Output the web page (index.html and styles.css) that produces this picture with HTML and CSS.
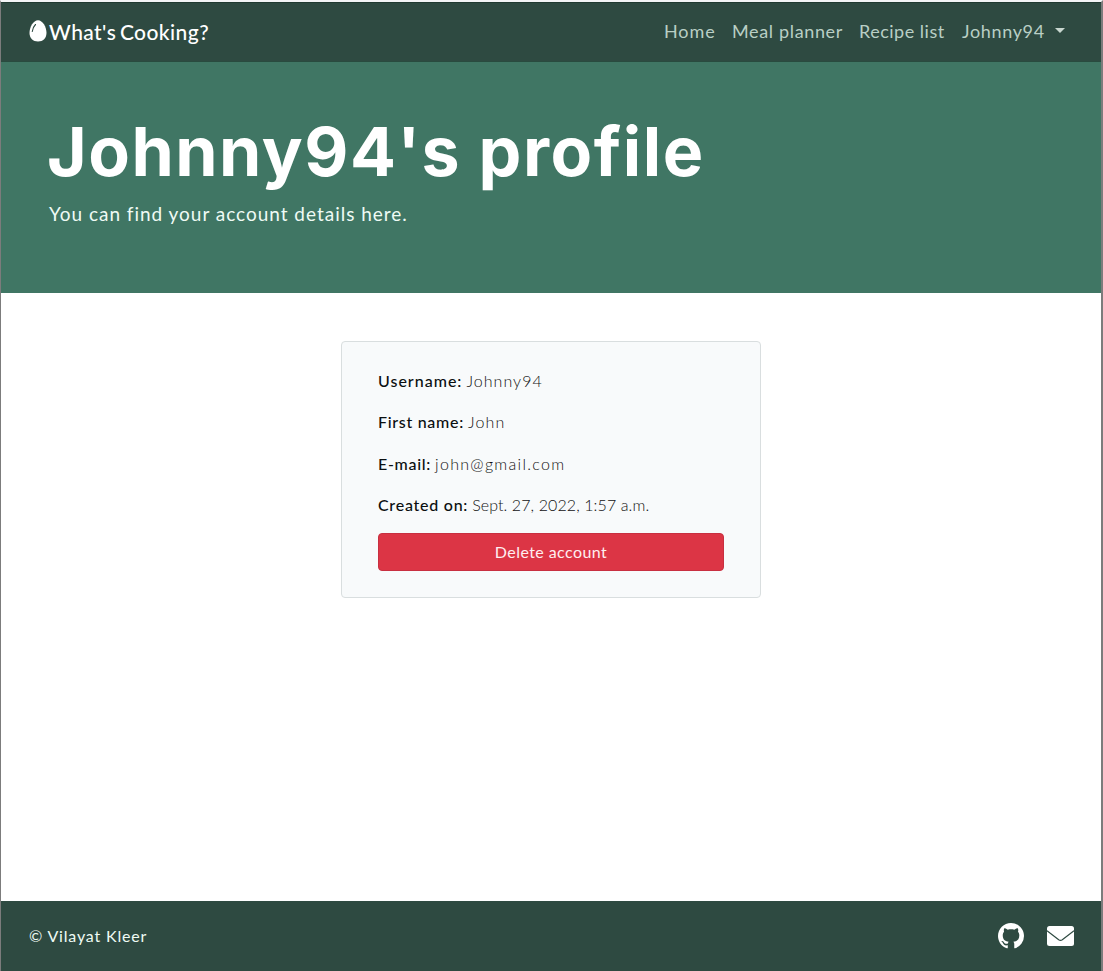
FILE: index.html
```html
<!DOCTYPE html>
<html lang="en">
<head>
<meta charset="utf-8">
<title>What's Cooking?</title>
<link rel="stylesheet" href="styles.css">
</head>
<body>
<div class="page">
  <header class="navbar">
    <a class="brand">
      <svg class="egg" viewBox="0 0 18 22"><path fill="#fff" d="M9 .3C4.400.3.5 7 .5 13c0 5 3.500 8.500 8.500 8.500s8.500-3.500 8.500-8.500C17.500 7 13.600.3 9 .3z"/><path d="M3.300 11.500C3.600 8.700 4.700 6.300 6.500 4.500" fill="none" stroke="#2e4a41" stroke-width="1.100" stroke-linecap="round"/></svg>
      <span class="brand-name">What's Cooking?</span>
    </a>
    <nav class="links">
      <a class="link home">Home</a>
      <a class="link planner">Meal planner</a>
      <a class="link recipes">Recipe list</a>
      <a class="link user">Johnny94</a>
      <span class="caret"></span>
    </nav>
  </header>
  <section class="hero">
    <h1 class="title">Johnny94's profile</h1>
    <p class="lead">You can find your account details here.</p>
  </section>
  <main class="content">
    <div class="card">
      <p class="row"><b class="k1">Username:</b><span class="v1">Johnny94</span></p>
      <p class="row"><b class="k2">First name:</b><span class="v2">John</span></p>
      <p class="row"><b class="k3">E-mail:</b><span class="v3">john@gmail.com</span></p>
      <p class="row"><b class="k4">Created on:</b><span class="v4">Sept. 27, 2022, 1:57 a.m.</span></p>
      <button class="delete"><span>Delete account</span></button>
    </div>
  </main>
  <footer class="footer">
    <span class="copy">© Vilayat Kleer</span>
    <div class="social">
      <svg class="github" viewBox="0 0 16 16"><path fill="#fff" d="M8 0C3.580 0 0 3.580 0 8c0 3.540 2.290 6.530 5.470 7.590.4.070.55-.17.55-.38 0-.19-.01-.82-.01-1.490-2.010.37-2.530-.49-2.690-.94-.09-.23-.48-.94-.82-1.130-.28-.15-.68-.52-.01-.53.63-.01 1.080.58 1.230.82.72 1.210 1.870.87 2.330.66.07-.52.28-.87.51-1.070-1.780-.2-3.640-.89-3.640-3.950 0-.87.31-1.590.82-2.150-.08-.2-.36-1.020.08-2.120 0 0 .67-.21 2.200.82.64-.18 1.320-.27 2-.27s1.360.09 2 .27c1.530-1.040 2.200-.82 2.200-.82.44 1.100.16 1.920.08 2.120.51.56.82 1.270.82 2.150 0 3.070-1.870 3.750-3.650 3.950.29.25.54.73.54 1.480 0 1.070-.01 1.930-.01 2.200 0 .21.15.46.55.38A8.010 8.010 0 0 0 16 8c0-4.420-3.580-8-8-8z"/></svg>
      <svg class="mail" viewBox="0 0 27 20"><rect width="27" height="20" rx="2.500" fill="#fff"/><path d="M0 4.800L11.700 13.700Q13.500 15 15.300 13.700L27 4.800" fill="none" stroke="#2e4a41" stroke-width="1.200"/></svg>
    </div>
  </footer>
</div>
</body>
</html>
```
FILE: styles.css
```css
* { box-sizing: border-box; }
body { margin: 0; background: #fff; font-family: Lato, "Open Sans", sans-serif; }
.page { height: 971px; display: flex; flex-direction: column; border-top: 2px solid #f3f5f6; border-left: 1px solid #7c7c7c; border-right: 2px solid #7c7c7c; overflow: hidden; }
.navbar { height: 60px; flex: none; display: flex; justify-content: space-between; align-items: center; padding: 0 36px 0 28px; background: #2e4a41; border-top: 1px solid #203a31; border-bottom: 1px solid #294b3f; }
.brand { display: flex; align-items: center; gap: 2px; color: #fff; }
.egg { width: 18px; height: 22px; margin-top: -2px; }
.brand-name { font-size: 21px; line-height: 30px; font-weight: 500; white-space: nowrap; letter-spacing: .42px; word-spacing: -2px; }
.links { display: flex; align-items: center; color: #b9cfc5; font-size: 18px; line-height: 28px; white-space: nowrap; margin-top: -2px; }
.home { width: 68px; letter-spacing: .9px; margin-left: -1px; }
.planner { width: 127px; letter-spacing: .65px; }
.recipes { width: 103px; letter-spacing: .5px; }
.user { width: 93px; letter-spacing: .65px; }
.caret { border: 5.500px solid transparent; border-top-color: #c9d7d0; border-bottom: 0; margin-top: -1px; }
.hero { height: 231px; flex: none; background: #407664; color: #fff; padding: 47px 48px; }
.title { margin: 0 0 0 -2px; font: 700 68px/84px Inter, sans-serif; letter-spacing: 1.500px; white-space: nowrap; }
.lead { margin: 6px 0 0; font-size: 19px; line-height: 30px; letter-spacing: .98px; color: #effbf5; white-space: nowrap; }
.content { flex: 1; display: flex; justify-content: center; align-items: flex-start; padding-top: 48px; }
.card { width: 420px; height: 257px; background: #f8fafb; border: 1px solid #d9dedf; border-radius: 4px; padding: 27px 36px 0; }
.row { margin: 0 0 17.300px; font-size: 16px; line-height: 24px; display: flex; gap: 4px; color: #111; white-space: nowrap; font-weight: 300; }
.row b { font-weight: 500; color: #0b0f10; }
.k1 { letter-spacing: 1px; }
.k2 { letter-spacing: .7px; }
.k3 { letter-spacing: .7px; }
.k4 { letter-spacing: .75px; }
.v1 { letter-spacing: 1.050px; }
.v2 { letter-spacing: 1.200px; }
.v3 { letter-spacing: 1.300px; }
.v4 { letter-spacing: .1px; }
.delete { display: block; width: 346px; height: 38px; margin-top: -1px; padding: 0; border: 1px solid #c82f40; border-radius: 4px; background: #dc3545; color: #ffeef0; font: 16px/24px Lato, sans-serif; letter-spacing: .42px; }
.footer { height: 70px; flex: none; display: flex; align-items: center; justify-content: space-between; padding: 0 27px 0 28px; background: #2e4a41; color: #eefbf4; font-size: 16px; }
.copy { letter-spacing: .82px; margin-top: -2px; }
.social { display: flex; align-items: center; gap: 23px; }
.github { width: 26px; height: 26px; }
.mail { width: 27px; height: 20px; }
```
